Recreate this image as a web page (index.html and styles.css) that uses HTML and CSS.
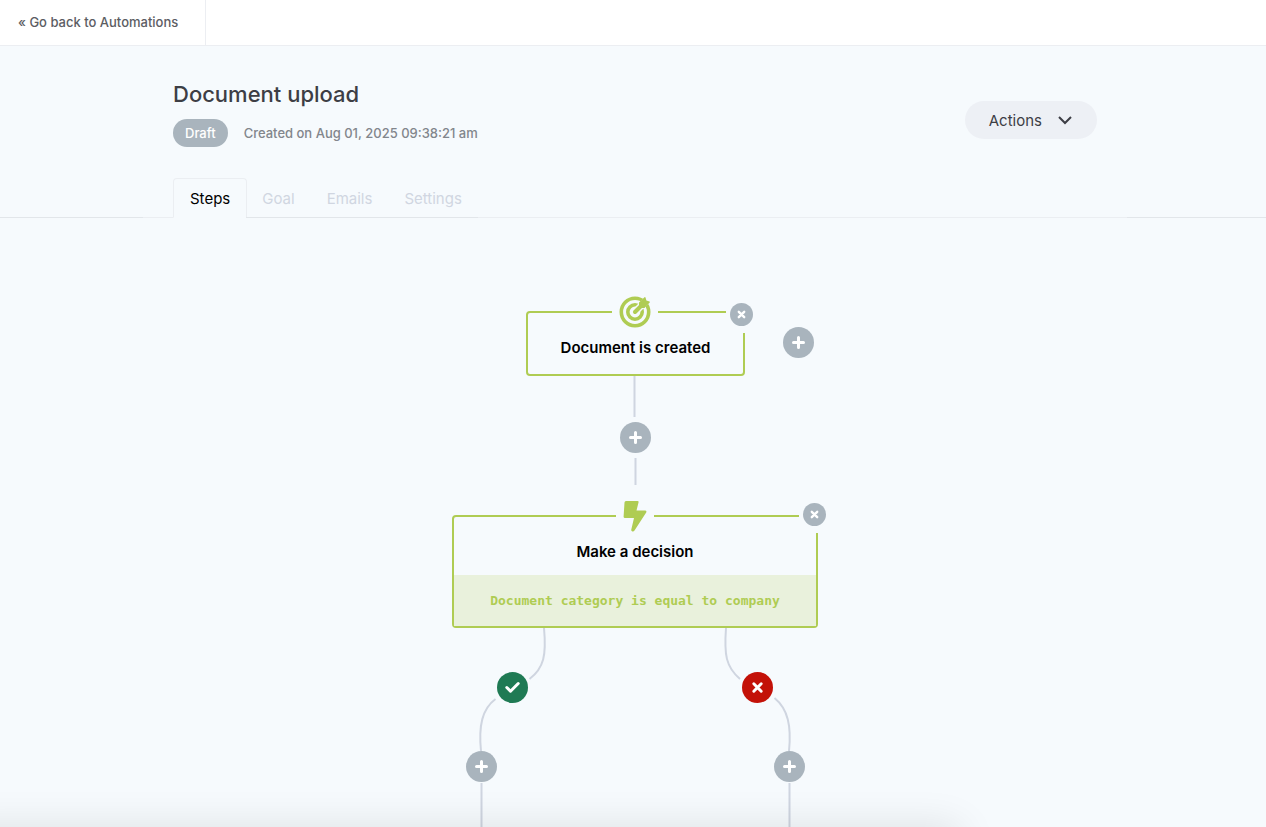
FILE: index.html
```
<!DOCTYPE html>
<html lang="en">
<head>
  <meta charset="UTF-8" />
  <meta name="viewport" content="width=device-width, initial-scale=1.0"/>
  <title>Document upload</title>
  <link rel="stylesheet" href="styles.css">
</head>
<body>

<header class="topbar">
  <a class="back-link" href="#">« Go back to Automations</a>
</header>

<main class="page">
  <section class="container heading">
    <div>
      <h1>Document upload</h1>
      <div class="meta">
        <span class="badge">Draft</span>
        <span class="created">Created on Aug 01, 2025 09:38:21 am</span>
      </div>
    </div>
    <button type="button" class="actions">
      Actions
      <svg width="16" height="10" viewBox="0 0 16 10" aria-hidden="true"><path d="M2 2l6 6 6-6"/></svg>
    </button>
  </section>

  <nav class="tabs">
    <div class="container tab-row">
      <a class="tab active" href="#">Steps</a>
      <a class="tab" href="#">Goal</a>
      <a class="tab" href="#">Emails</a>
      <a class="tab" href="#">Settings</a>
    </div>
  </nav>

  <section class="canvas">
    <!-- connectors between the steps -->
    <svg class="connectors" aria-hidden="true">
      <path d="M299.5 158V199"/>
      <path d="M300.5 240V267"/>
      <path d="M209 410C211.500 437 209 450 194.500 461"/>
      <path d="M160.500 481C147 491 143.500 508 146 533"/>
      <path d="M391 410C389 437 391 449 405 461"/>
      <path d="M439.500 480C453 491 456.500 508 454 533"/>
      <line x1="146.500" y1="565" x2="146.500" y2="100%"/>
      <line x1="454.500" y1="565" x2="454.500" y2="100%"/>
    </svg>

    <article class="step step-trigger">
      <span class="step-icon target">
        <svg width="32" height="32" viewBox="0 0 32 32" aria-hidden="true">
          <circle class="ring" cx="16" cy="16" r="13.700"/>
          <circle class="ring" cx="16" cy="16" r="7.200"/>
          <path class="arrow-gap" d="M16 16L31 1"/>
          <path class="arrow" d="M16 16l8-8"/>
          <path class="fill" d="M20 6.500L25.500 1.200Q26.200 .8 26.500 1.600L27.400 4.600 30.500 5.500Q31.300 5.900 30.700 6.600L25.500 12H20Z"/>
        </svg>
      </span>
      <h2>Document is created</h2>
      <span class="step-close"><button type="button" class="round small" aria-label="Remove trigger"><svg width="11" height="11" viewBox="0 0 11 11"><path d="M2.800 2.800l5.400 5.400M8.200 2.800l-5.400 5.400"/></svg></button></span>
    </article>

    <article class="step step-decision">
      <span class="step-icon bolt">
        <svg width="24" height="32" viewBox="0 0 24 32" aria-hidden="true">
          <path class="fill" d="M3 1H14.500Q16 1 15.500 2.500L13.500 10.500H22Q24 10.500 23.200 12.500L11.500 30.500Q10.500 32 9 31.300Q8 30.800 8.300 29.500L11 18H2Q.5 18 .6 16.500L1.500 2.500Q1.600 1 3 1Z"/>
        </svg>
      </span>
      <h2>Make a decision</h2>
      <p class="condition">Document category is equal to company</p>
      <span class="step-close"><button type="button" class="round small" aria-label="Remove decision"><svg width="11" height="11" viewBox="0 0 11 11"><path d="M2.800 2.800l5.400 5.400M8.200 2.800l-5.400 5.400"/></svg></button></span>
    </article>

    <button type="button" class="round add add-trigger" aria-label="Add trigger"><svg width="15" height="15" viewBox="0 0 15 15"><path d="M7.500 2.500v10M2.500 7.500h10"/></svg></button>
    <button type="button" class="round add add-step" aria-label="Add step"><svg width="15" height="15" viewBox="0 0 15 15"><path d="M7.500 2.500v10M2.500 7.500h10"/></svg></button>
    <span class="round yes"><svg width="15" height="15" viewBox="0 0 15 15"><path d="M1.800 7.500l3.700 3.700L13.200 3.500"/></svg></span>
    <span class="round no"><svg width="15" height="15" viewBox="0 0 15 15"><path d="M3.800 3.800l7.400 7.400M11.200 3.800l-7.400 7.400"/></svg></span>
    <button type="button" class="round add add-yes" aria-label="Add step to yes branch"><svg width="15" height="15" viewBox="0 0 15 15"><path d="M7.500 2.500v10M2.500 7.500h10"/></svg></button>
    <button type="button" class="round add add-no" aria-label="Add step to no branch"><svg width="15" height="15" viewBox="0 0 15 15"><path d="M7.500 2.500v10M2.500 7.500h10"/></svg></button>
  </section>
</main>

<div class="bottom-shadow"></div>

</body>
</html>
```

FILE: styles.css
```
* {
  box-sizing: border-box;
}
body {
  margin: 0;
  min-height: 100vh;
  display: flex;
  flex-direction: column;
  font-family: Inter, "Liberation Sans", sans-serif;
  background-color: #f6fafd;
  color: #3d3e45;
}
h1, h2, p {
  margin: 0;
}
a {
  text-decoration: none;
}
button {
  font-family: inherit;
  border: none;
  cursor: pointer;
}
svg {
  display: block;
  fill: none;
}

/* top bar */
.topbar {
  display: flex;
  height: 46px;
  background-color: #fff;
  border-bottom: 1px solid #eceef2;
}
.back-link {
  padding: 0 27px 0 18px;
  border-right: 1px solid #eceef2;
  color: #5c5d63;
  font-size: 13px;
  line-height: 44px;
  font-weight: 500;
}

/* heading */
.page {
  flex: 1;
  display: flex;
  flex-direction: column;
  padding-left: 4px;
}
.container {
  width: 100%;
  max-width: 984px;
  margin: 0 auto;
}
.heading {
  display: flex;
  justify-content: space-between;
  align-items: flex-end;
  padding: 32px 30px 31px;
}
h1 {
  font-size: 22px;
  line-height: 32px;
  font-weight: 500;
}
.meta {
  display: flex;
  align-items: center;
  gap: 16px;
  margin-top: 9px;
}
.badge {
  padding: 0 12px;
  border-radius: 14px;
  background-color: #a9b4bd;
  color: #fff;
  font-size: 13px;
  line-height: 28px;
  font-weight: 500;
}
.created {
  color: #82868c;
  font-size: 13px;
  font-weight: 500;
}
.actions {
  display: flex;
  align-items: center;
  gap: 15px;
  height: 38px;
  margin-bottom: 8px;
  padding: 0 24px;
  border-radius: 19px;
  background-color: #edf0f5;
  color: #3d3e45;
  font-size: 15px;
}
.actions svg {
  stroke: #3d3e45;
  stroke-width: 2;
}

/* tabs */
.tabs {
  display: flex;
  height: 40px;
  margin-left: -4px;
}
.tabs::before, .tabs::after {
  content: "";
  flex: 1 0 0;
  border-bottom: 1px solid #e2e6ea;
}
.tabs::before {
  flex-basis: 4px;
}
.tab-row {
  display: flex;
}
.tab-row::before {
  content: "";
  width: 30px;
  border-bottom: 1px solid #ebeef2;
}
.tab-row::after {
  content: "";
  flex: 1;
  border-bottom: 1px solid #ebeef2;
}
.tab {
  padding: 1px 16px 0;
  border-bottom: 1px solid #e2e6ea;
  color: #d0d6e1;
  font-size: 15px;
  line-height: 40px;
}
.tab.active {
  margin-right: -1px;
  border: 1px solid #ebeef2;
  border-bottom-color: transparent;
  border-radius: 4px 4px 0 0;
  color: #000;
  line-height: 38px;
}

/* workflow canvas */
.canvas {
  position: relative;
  flex: 1;
  width: 600px;
  min-height: 600px;
  margin: 0 auto;
}
.connectors {
  position: absolute;
  width: 100%;
  height: 100%;
  stroke: #cfd5e0;
  stroke-width: 2;
}
.step {
  position: absolute;
  border: 2px solid #afcc53;
  border-radius: 4px;
  background-color: #f6fafd;
  text-align: center;
}
.step h2 {
  padding-top: 25px;
  color: #000;
  font-size: 15px;
  line-height: 20px;
  font-weight: 600;
}
.step-trigger {
  left: 191px;
  top: 93px;
  width: 219px;
  height: 65px;
}
.step-decision {
  left: 117px;
  top: 297px;
  width: 366px;
  height: 113px;
}
.condition {
  margin-top: 13px;
  background-color: #e9f1dc;
  color: #afcc53;
  font-family: "DejaVu Sans Mono", monospace;
  font-size: 13px;
  line-height: 51px;
  font-weight: bold;
}
.step-icon {
  position: absolute;
  top: -17px;
  padding: 0 7px;
  background-color: #f6fafd;
}
.target {
  left: 84px;
}
.bolt {
  left: 162px;
}
.fill {
  fill: #afcc53;
}
.ring, .arrow {
  stroke: #afcc53;
  stroke-width: 4;
  stroke-linecap: round;
}
.ring {
  stroke-width: 3.6;
}
.arrow-gap {
  stroke: #f6fafd;
  stroke-width: 7;
}
.step-close {
  position: absolute;
  top: -10px;
  right: -14px;
  padding: 0 4px 7px;
  background-color: #f6fafd;
}
.step-decision .step-close {
  top: -14px;
}
.round {
  display: flex;
  justify-content: center;
  align-items: center;
  width: 31px;
  height: 31px;
  padding: 0;
  border-radius: 50%;
  background-color: #a9b4bd;
}
.round.small {
  width: 23px;
  height: 23px;
}
.round svg {
  stroke: #fff;
  stroke-width: 3;
  stroke-linecap: round;
  stroke-linejoin: round;
}
.round.small svg {
  stroke-width: 2.4;
}
.add, .yes, .no {
  position: absolute;
}
.round.yes {
  left: 162px;
  top: 454px;
  background-color: #1f7a54;
}
.round.no {
  left: 407px;
  top: 454px;
  background-color: #c31108;
}
.add-trigger {
  left: 448px;
  top: 109px;
}
.add-step {
  left: 285px;
  top: 204px;
}
.add-yes {
  left: 131px;
  top: 533px;
}
.add-no {
  left: 439px;
  top: 533px;
}

/* soft shadow along the bottom edge */
.bottom-shadow {
  position: fixed;
  left: -40px;
  right: 306px;
  top: 100%;
  height: 40px;
  box-shadow: 0 0 40px rgba(0, 0, 0, 0.11);
  pointer-events: none;
}
```
